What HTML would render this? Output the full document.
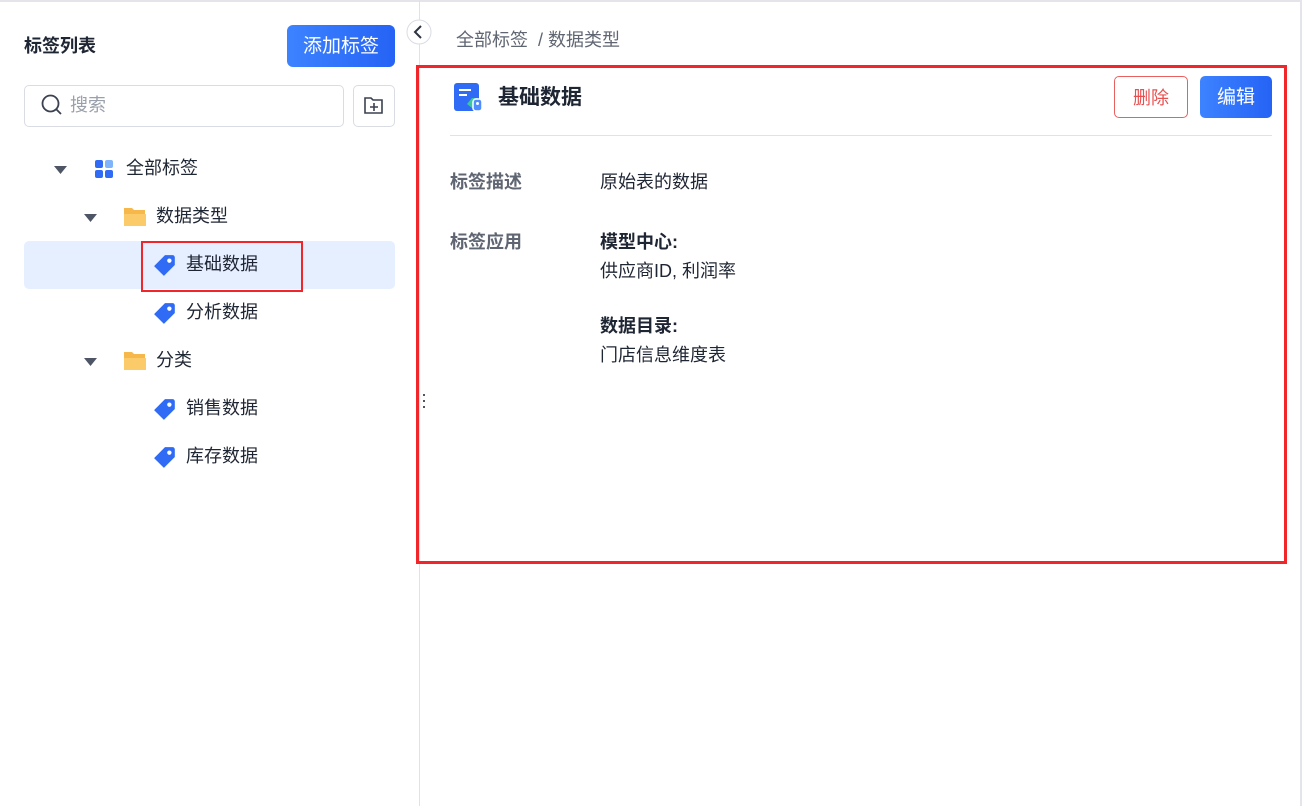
<!DOCTYPE html>
<html><head><meta charset="utf-8"><style>
*{margin:0;padding:0;box-sizing:border-box}
body{width:1302px;height:806px;background:#fff;font-family:"Liberation Sans","Noto Sans CJK SC",sans-serif;position:relative;overflow:hidden;color:#1f2633}
.a{position:absolute}
.t{font-size:18px;line-height:22px;color:#1f2633;white-space:nowrap}
</style></head><body>
<div class="a" style="left:0;top:0;width:1302px;height:2px;background:#e3e5ea"></div>
<div class="a" style="left:419px;top:0;width:1px;height:806px;background:#dfe2e8"></div>
<div class="a" style="left:1300px;top:0;width:2px;height:806px;background:#e3e5ea"></div>
<div class="a t" style="left:24px;top:35px;font-weight:bold;font-size:18px">标签列表</div>
<div class="a" style="left:287px;top:25px;width:108px;height:42px;border-radius:6px;background:linear-gradient(90deg,#3d83ff,#2563f5);color:#fff;font-size:19px;text-align:center;line-height:43px">添加标签</div>
<div class="a" style="left:24px;top:85px;width:320px;height:42px;border:1px solid #d9dce3;border-radius:5px"></div>
<svg class="a" style="left:40px;top:93px" width="24" height="24" viewBox="0 0 24 24"><circle cx="10.5" cy="10.5" r="8" fill="none" stroke="#3a4150" stroke-width="1.8"/><path d="M16.5 16.5L21 21" stroke="#3a4150" stroke-width="1.8"/></svg>
<div class="a t" style="left:70px;top:94px;color:#9aa0aa">搜索</div>
<div class="a" style="left:353px;top:85px;width:42px;height:42px;border:1px solid #d9dce3;border-radius:5px"></div>
<svg class="a" style="left:363px;top:96px" width="22" height="20" viewBox="0 0 22 20"><path d="M2 2h6l2 2h9v13H2z" fill="none" stroke="#3a4150" stroke-width="1.6"/><path d="M11 7v8M7 11h8" stroke="#3a4150" stroke-width="1.6"/></svg>
<svg class="a" style="left:405px;top:19px" width="28" height="28"><circle cx="14" cy="13" r="12" fill="#fff" stroke="#d9dce3"/><path d="M16 7l-6 6 6 6" fill="none" stroke="#2d3340" stroke-width="2"/></svg>
<svg class="a" style="left:54px;top:166px" width="14" height="9"><path d="M0 0h13L6.5 8z" fill="#4e5666"/></svg>
<svg class="a" style="left:95px;top:160px" width="20" height="20"><rect x="0" y="0" width="8" height="8" rx="2" fill="#2f6bf5"/><rect x="10" y="0" width="8" height="8" rx="2" fill="#7fb4fb"/><rect x="0" y="10" width="8" height="8" rx="2" fill="#2f6bf5"/><rect x="10" y="10" width="8" height="8" rx="2" fill="#2f6bf5"/></svg>
<div class="a t" style="left:126px;top:157px">全部标签</div>
<svg class="a" style="left:84px;top:214px" width="14" height="9"><path d="M0 0h13L6.5 8z" fill="#4e5666"/></svg>
<svg class="a" style="left:123px;top:206px" width="24" height="22"><path d="M1 2h8l2 2h11v16H1z" fill="#f7b84b"/><path d="M1 8h22v12H1z" fill="#fbcb6a"/></svg>
<div class="a t" style="left:156px;top:205px">数据类型</div>
<div class="a" style="left:24px;top:241px;width:371px;height:48px;background:#e6efff;border-radius:5px"></div>
<div class="a" style="left:141px;top:241px;width:162px;height:51px;border:2px solid #f0262b"></div>
<svg class="a" style="left:153px;top:253px" width="24" height="24" viewBox="0 0 22 22"><path d="M11 2h7a2 2 0 0 1 2 2v7L10 21 1 12z" fill="#2f6bf5"/><circle cx="15" cy="7" r="2" fill="#fff"/></svg>
<div class="a t" style="left:186px;top:253px">基础数据</div>
<svg class="a" style="left:153px;top:301px" width="24" height="24" viewBox="0 0 22 22"><path d="M11 2h7a2 2 0 0 1 2 2v7L10 21 1 12z" fill="#2f6bf5"/><circle cx="15" cy="7" r="2" fill="#fff"/></svg>
<div class="a t" style="left:186px;top:301px">分析数据</div>
<svg class="a" style="left:84px;top:358px" width="14" height="9"><path d="M0 0h13L6.5 8z" fill="#4e5666"/></svg>
<svg class="a" style="left:123px;top:350px" width="24" height="22"><path d="M1 2h8l2 2h11v16H1z" fill="#f7b84b"/><path d="M1 8h22v12H1z" fill="#fbcb6a"/></svg>
<div class="a t" style="left:156px;top:349px">分类</div>
<svg class="a" style="left:153px;top:397px" width="24" height="24" viewBox="0 0 22 22"><path d="M11 2h7a2 2 0 0 1 2 2v7L10 21 1 12z" fill="#2f6bf5"/><circle cx="15" cy="7" r="2" fill="#fff"/></svg>
<div class="a t" style="left:186px;top:397px">销售数据</div>
<svg class="a" style="left:153px;top:445px" width="24" height="24" viewBox="0 0 22 22"><path d="M11 2h7a2 2 0 0 1 2 2v7L10 21 1 12z" fill="#2f6bf5"/><circle cx="15" cy="7" r="2" fill="#fff"/></svg>
<div class="a t" style="left:186px;top:445px">库存数据</div>
<div class="a" style="left:423px;top:394px;width:2px;height:2px;background:#4e5666;box-shadow:0 6px #4e5666,0 12px #4e5666"></div>
<div class="a t" style="left:456px;top:29px;color:#5f6672">全部标签 &nbsp;/ 数据类型</div>
<div class="a" style="left:416px;top:65px;width:871px;height:499px;border:3px solid #f0262b"></div>
<svg class="a" style="left:453px;top:82px" width="30" height="32" viewBox="0 0 30 32"><rect x="1" y="1" width="25" height="28" rx="3" fill="#2f6bf5"/><path d="M6 8h12M6 13h8" stroke="#fff" stroke-width="2"/><path d="M14 22l5-6h6v10h-6z" fill="#3cc7a0"/><rect x="20" y="17" width="9" height="12" rx="3" fill="#4f8cff" stroke="#fff" stroke-width="1.5"/><circle cx="24.5" cy="21.5" r="1.5" fill="#fff"/></svg>
<div class="a t" style="left:498px;top:85px;font-weight:bold;font-size:21px;line-height:26px">基础数据</div>
<div class="a" style="left:1114px;top:76px;width:74px;height:42px;border:1px solid #e86060;border-radius:5px;color:#e85050;font-size:18px;text-align:center;line-height:42px">删除</div>
<div class="a" style="left:1200px;top:76px;width:72px;height:42px;border-radius:5px;background:linear-gradient(90deg,#3d83ff,#2563f5);color:#fff;font-size:19px;text-align:center;line-height:43px">编辑</div>
<div class="a" style="left:450px;top:135px;width:822px;height:1px;background:#dfe2e8"></div>
<div class="a t" style="left:450px;top:171px;color:#5f6672;font-weight:bold">标签描述</div>
<div class="a t" style="left:600px;top:171px">原始表的数据</div>
<div class="a t" style="left:450px;top:231px;color:#5f6672;font-weight:bold">标签应用</div>
<div class="a t" style="left:600px;top:231px;font-weight:bold">模型中心:</div>
<div class="a t" style="left:600px;top:260px">供应商ID, 利润率</div>
<div class="a t" style="left:600px;top:315px;font-weight:bold">数据目录:</div>
<div class="a t" style="left:600px;top:344px">门店信息维度表</div>
</body></html>
